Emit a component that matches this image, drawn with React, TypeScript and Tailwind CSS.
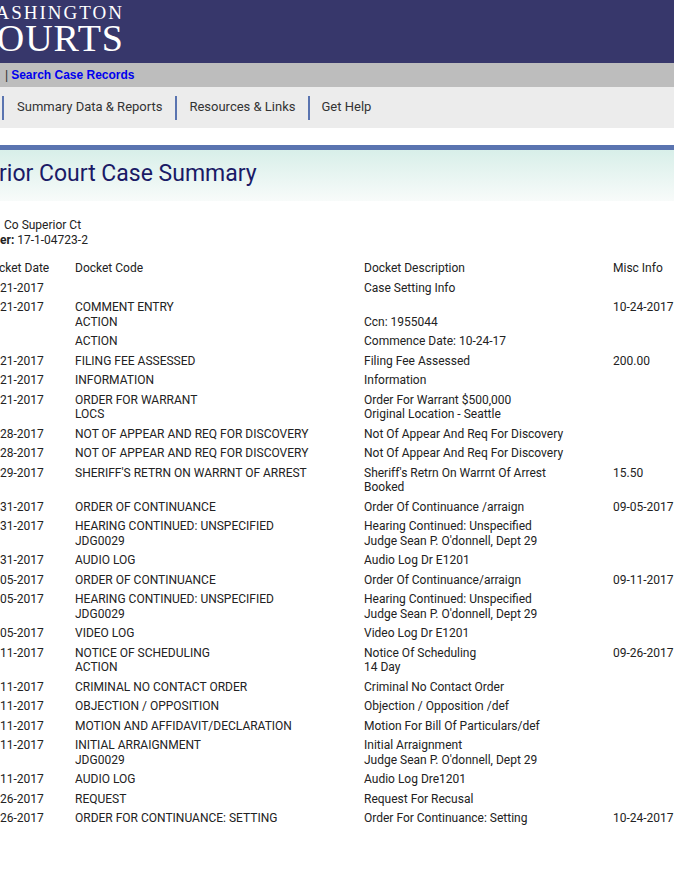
const rows: [string, string[], string[], string][] = [
  ["21-2017", [""], ["Case Setting Info"], ""],
  ["21-2017", ["COMMENT ENTRY", "ACTION"], ["", "Ccn: 1955044"], "10-24-2017"],
  ["", ["ACTION"], ["Commence Date: 10-24-17"], ""],
  ["21-2017", ["FILING FEE ASSESSED"], ["Filing Fee Assessed"], "200.00"],
  ["21-2017", ["INFORMATION"], ["Information"], ""],
  ["21-2017", ["ORDER FOR WARRANT", "LOCS"], ["Order For Warrant $500,000", "Original Location - Seattle"], ""],
  ["28-2017", ["NOT OF APPEAR AND REQ FOR DISCOVERY"], ["Not Of Appear And Req For Discovery"], ""],
  ["28-2017", ["NOT OF APPEAR AND REQ FOR DISCOVERY"], ["Not Of Appear And Req For Discovery"], ""],
  ["29-2017", ["SHERIFF'S RETRN ON WARRNT OF ARREST"], ["Sheriff's Retrn On Warrnt Of Arrest", "Booked"], "15.50"],
  ["31-2017", ["ORDER OF CONTINUANCE"], ["Order Of Continuance /arraign"], "09-05-2017"],
  ["31-2017", ["HEARING CONTINUED: UNSPECIFIED", "JDG0029"], ["Hearing Continued: Unspecified", "Judge Sean P. O'donnell, Dept 29"], ""],
  ["31-2017", ["AUDIO LOG"], ["Audio Log Dr E1201"], ""],
  ["05-2017", ["ORDER OF CONTINUANCE"], ["Order Of Continuance/arraign"], "09-11-2017"],
  ["05-2017", ["HEARING CONTINUED: UNSPECIFIED", "JDG0029"], ["Hearing Continued: Unspecified", "Judge Sean P. O'donnell, Dept 29"], ""],
  ["05-2017", ["VIDEO LOG"], ["Video Log Dr E1201"], ""],
  ["11-2017", ["NOTICE OF SCHEDULING", "ACTION"], ["Notice Of Scheduling", "14 Day"], "09-26-2017"],
  ["11-2017", ["CRIMINAL NO CONTACT ORDER"], ["Criminal No Contact Order"], ""],
  ["11-2017", ["OBJECTION / OPPOSITION"], ["Objection / Opposition /def"], ""],
  ["11-2017", ["MOTION AND AFFIDAVIT/DECLARATION"], ["Motion For Bill Of Particulars/def"], ""],
  ["11-2017", ["INITIAL ARRAIGNMENT", "JDG0029"], ["Initial Arraignment", "Judge Sean P. O'donnell, Dept 29"], ""],
  ["11-2017", ["AUDIO LOG"], ["Audio Log Dre1201"], ""],
  ["26-2017", ["REQUEST"], ["Request For Recusal"], ""],
  ["26-2017", ["ORDER FOR CONTINUANCE: SETTING"], ["Order For Continuance: Setting"], "10-24-2017"],
];

function Lines({ items }: { items: string[] }) {
  return (
    <>
      {items.map((t, i) => (
        <div key={i} className="h-[14.5px] whitespace-nowrap">
          {t}
        </div>
      ))}
    </>
  );
}

export default function App() {
  return (
    <div className="w-[674px] h-[873px] overflow-hidden bg-white font-['Roboto',sans-serif] text-[12px] leading-[14.5px] text-[#222]">
      <div className="h-[63px] bg-[#37376b] flex justify-end pr-[550px] overflow-hidden">
        <div className="shrink-0 text-white font-['Liberation_Serif',serif] text-right pt-[3px]">
          <div className="text-[19px] leading-[19px] tracking-[2px] whitespace-nowrap">ASHINGTON</div>
          <div className="text-[38px] leading-[32px] tracking-[1px] whitespace-nowrap">OURTS</div>
        </div>
      </div>
      <div className="h-[24px] bg-[#bdbdbd] flex items-center font-['Liberation_Sans',sans-serif] text-[12px] pl-[5px]">
        <span className="text-[#333]">|</span>
        <span className="ml-[3px] font-bold text-[#0000ee]">Search Case Records</span>
      </div>
      <div className="h-[41px] bg-[#ececec] flex items-center text-[13px] text-[#333]">
        <div className="h-[24px] border-r-2 border-[#5a74b0] w-[4px]" />
        <div className="px-[13px]">Summary Data &amp; Reports</div>
        <div className="h-[24px] border-r-2 border-[#5a74b0]" />
        <div className="px-[12px]">Resources &amp; Links</div>
        <div className="h-[24px] border-r-2 border-[#5a74b0]" />
        <div className="px-[12px]">Get Help</div>
      </div>
      <div className="h-[17px]" />
      <div className="h-[56px] border-t-[5px] border-[#5a74b0] bg-gradient-to-b from-[#d8efe9] to-[#f8fbfa] pl-[0px] flex items-center">
        <div className="text-[23px] leading-[30px] text-[#1a1a66] whitespace-nowrap -ml-[1px] pb-[4px]">rior Court Case Summary</div>
      </div>
      <div className="pt-[17px] h-[60px]">
        <div className="pl-[4px]">Co Superior Ct</div>
        <div className="whitespace-nowrap"><b>er:</b> 17-1-04723-2</div>
      </div>
      <div className="grid grid-cols-[75px_289px_249px_61px] pb-[5px]">
        <div className="whitespace-nowrap -ml-[1px]">cket Date</div>
        <div>Docket Code</div>
        <div>Docket Description</div>
        <div>Misc Info</div>
      </div>
      {rows.map((r, i) => (
        <div key={i} className="grid grid-cols-[75px_289px_249px_61px] pb-[5px] mt-0">
          <div>{r[0]}</div>
          <div><Lines items={r[1]} /></div>
          <div><Lines items={r[2]} /></div>
          <div className="whitespace-nowrap">{r[3]}</div>
        </div>
      ))}
    </div>
  );
}
